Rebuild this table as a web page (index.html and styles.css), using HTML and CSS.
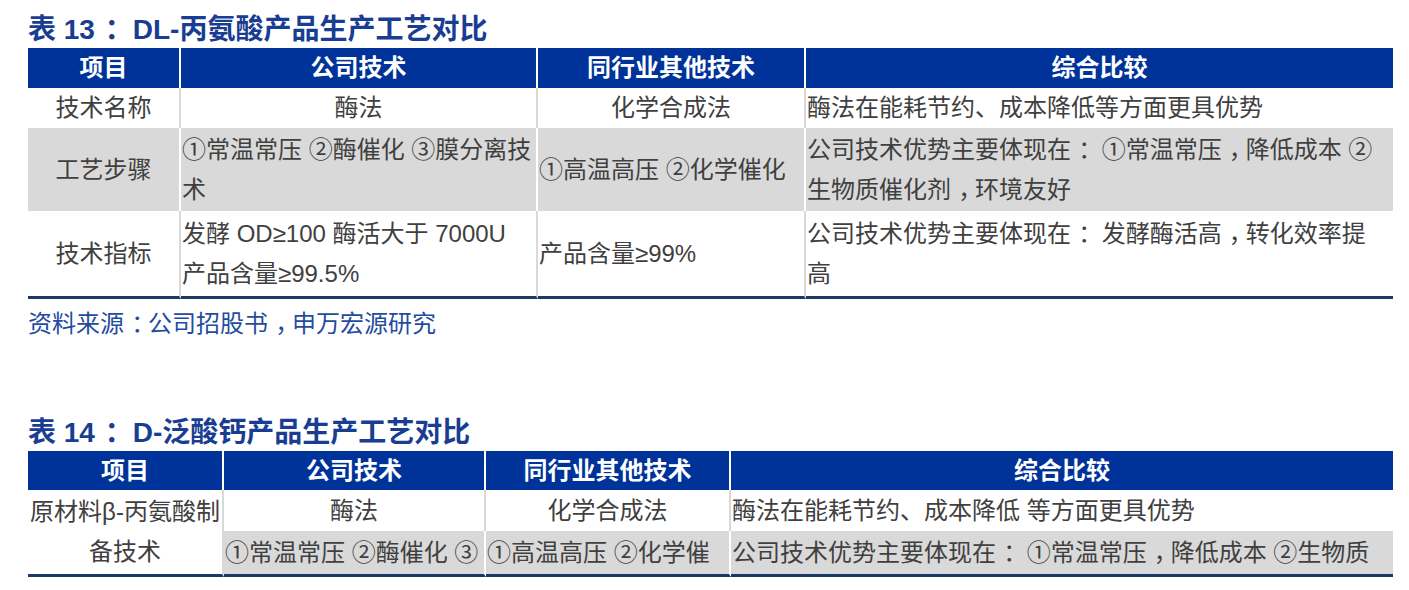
FILE: index.html
```html
<!DOCTYPE html>
<html lang="zh-CN">
<head>
<meta charset="utf-8">
<title>工艺对比</title>
<link rel="stylesheet" href="styles.css">
</head>
<body>
<div class="page">
  <h2 class="cap">表 13<span class="pt">：</span>DL-丙氨酸产品生产工艺对比</h2>
  <table class="tbl t13">
    <colgroup>
      <col class="c1"><col class="c2"><col class="c3"><col class="c4">
    </colgroup>
    <thead>
      <tr class="hd">
        <th>项目</th><th>公司技术</th><th>同行业其他技术</th><th>综合比较</th>
      </tr>
    </thead>
    <tbody>
      <tr class="r1">
        <td class="ctr">技术名称</td>
        <td class="ctr">酶法</td>
        <td class="ctr">化学合成法</td>
        <td>酶法在能耗节约、成本降低等方面更具优势</td>
      </tr>
      <tr class="r2 gray">
        <td class="ctr">工艺步骤</td>
        <td>①常温常压 ②酶催化 ③膜分离技<br>术</td>
        <td>①高温高压 ②化学催化</td>
        <td>公司技术优势主要体现在<span class="p">：</span> ①常温常压<span class="p">，</span>降低成本 ②<br>生物质催化剂<span class="p">，</span>环境友好</td>
      </tr>
      <tr class="r3">
        <td class="ctr">技术指标</td>
        <td>发酵 OD≥100 酶活大于 7000U<br>产品含量≥99.5%</td>
        <td>产品含量≥99%</td>
        <td>公司技术优势主要体现在<span class="p">：</span> 发酵酶活高<span class="p">，</span>转化效率提<br>高</td>
      </tr>
    </tbody>
  </table>
  <p class="src">资料来源<span class="p">：</span>公司招股书<span class="p">，</span>申万宏源研究</p>

  <h2 class="cap cap2">表 14<span class="pt">：</span>D-泛酸钙产品生产工艺对比</h2>
  <table class="tbl t14">
    <colgroup>
      <col class="c1"><col class="c2"><col class="c3"><col class="c4">
    </colgroup>
    <thead>
      <tr class="hd">
        <th>项目</th><th>公司技术</th><th>同行业其他技术</th><th>综合比较</th>
      </tr>
    </thead>
    <tbody>
      <tr class="q1">
        <td class="ctr first" rowspan="2">原材料β-丙氨酸制<br>备技术</td>
        <td class="ctr">酶法</td>
        <td class="ctr">化学合成法</td>
        <td>酶法在能耗节约、成本降低 等方面更具优势</td>
      </tr>
      <tr class="q2 gray">
        <td>①常温常压 ②酶催化 ③</td>
        <td>①高温高压 ②化学催</td>
        <td>公司技术优势主要体现在<span class="p">：</span> ①常温常压<span class="p">，</span>降低成本 ②生物质</td>
      </tr>
    </tbody>
  </table>
</div>
</body>
</html>
```

FILE: styles.css
```css
html, body {
  margin: 0;
  padding: 0;
  background: #ffffff;
}

body {
  font-family: "Liberation Sans", "Noto Sans CJK SC", sans-serif;
  color: #404040;
}

.page {
  width: 1365px;
  padding: 12px 0 0 28px;
}

/* full-width punctuation drawn centred in its em box:
   the glyph is pushed right and its advance shortened by the same amount */
.p {
  padding-left: 0.3em;
  letter-spacing: -0.3em;
}

.pt {
  padding-left: 0.35em;
}

.cap {
  margin: 0;
  font-size: 28px;
  line-height: 36px;
  height: 36px;
  font-weight: 700;
  color: #183d92;
  white-space: nowrap;
}

.cap2 {
  margin-top: 73px;
}

.tbl {
  width: 1365px;
  table-layout: fixed;
  border-collapse: separate;
  border-spacing: 0;
  font-size: 24px;
}

.t13 .c1 { width: 153px; }
.t13 .c2 { width: 357px; }
.t13 .c3 { width: 268px; }
.t13 .c4 { width: 587px; }

.t14 .c1 { width: 196px; }
.t14 .c2 { width: 262px; }
.t14 .c3 { width: 245px; }
.t14 .c4 { width: 662px; }

.tbl th,
.tbl td {
  padding: 0 1px;
  vertical-align: middle;
  white-space: nowrap;
  overflow: hidden;
  text-align: left;
}

.tbl th {
  background: #003399;
  color: #ffffff;
  font-weight: 700;
  text-align: center;
  line-height: 38px;
  border-right: 2px solid #ffffff;
}

.tbl td {
  line-height: 40px;
  border-right: 2px solid #d9d9d9;
}

.tbl th:last-child,
.tbl td:last-child {
  border-right: none;
}

.tbl td.ctr {
  text-align: center;
}

.tbl tr.gray td {
  background: #d9d9d9;
  border-right-color: #ffffff;
}

.tbl tr.gray td:last-child {
  border-right: none;
}

.t13 .hd { height: 40px; }
.t13 .r1 { height: 40px; }
.t13 .r2 { height: 83px; }
.t13 .r3 { height: 88px; }
.t13 .r3 td { border-bottom: 3px solid #1c3769; }

.t14 .hd { height: 39px; }
.t14 .q1 { height: 41px; }
.t14 .q2 { height: 46px; }
.t14 .q2 td,
.t14 td.first { border-bottom: 3px solid #1c3769; }
.t14 td.first { background: #ffffff; }

.src {
  margin: 7px 0 0 0;
  font-size: 24px;
  line-height: 36px;
  height: 36px;
  color: #1f4c9f;
  white-space: nowrap;
}
```
